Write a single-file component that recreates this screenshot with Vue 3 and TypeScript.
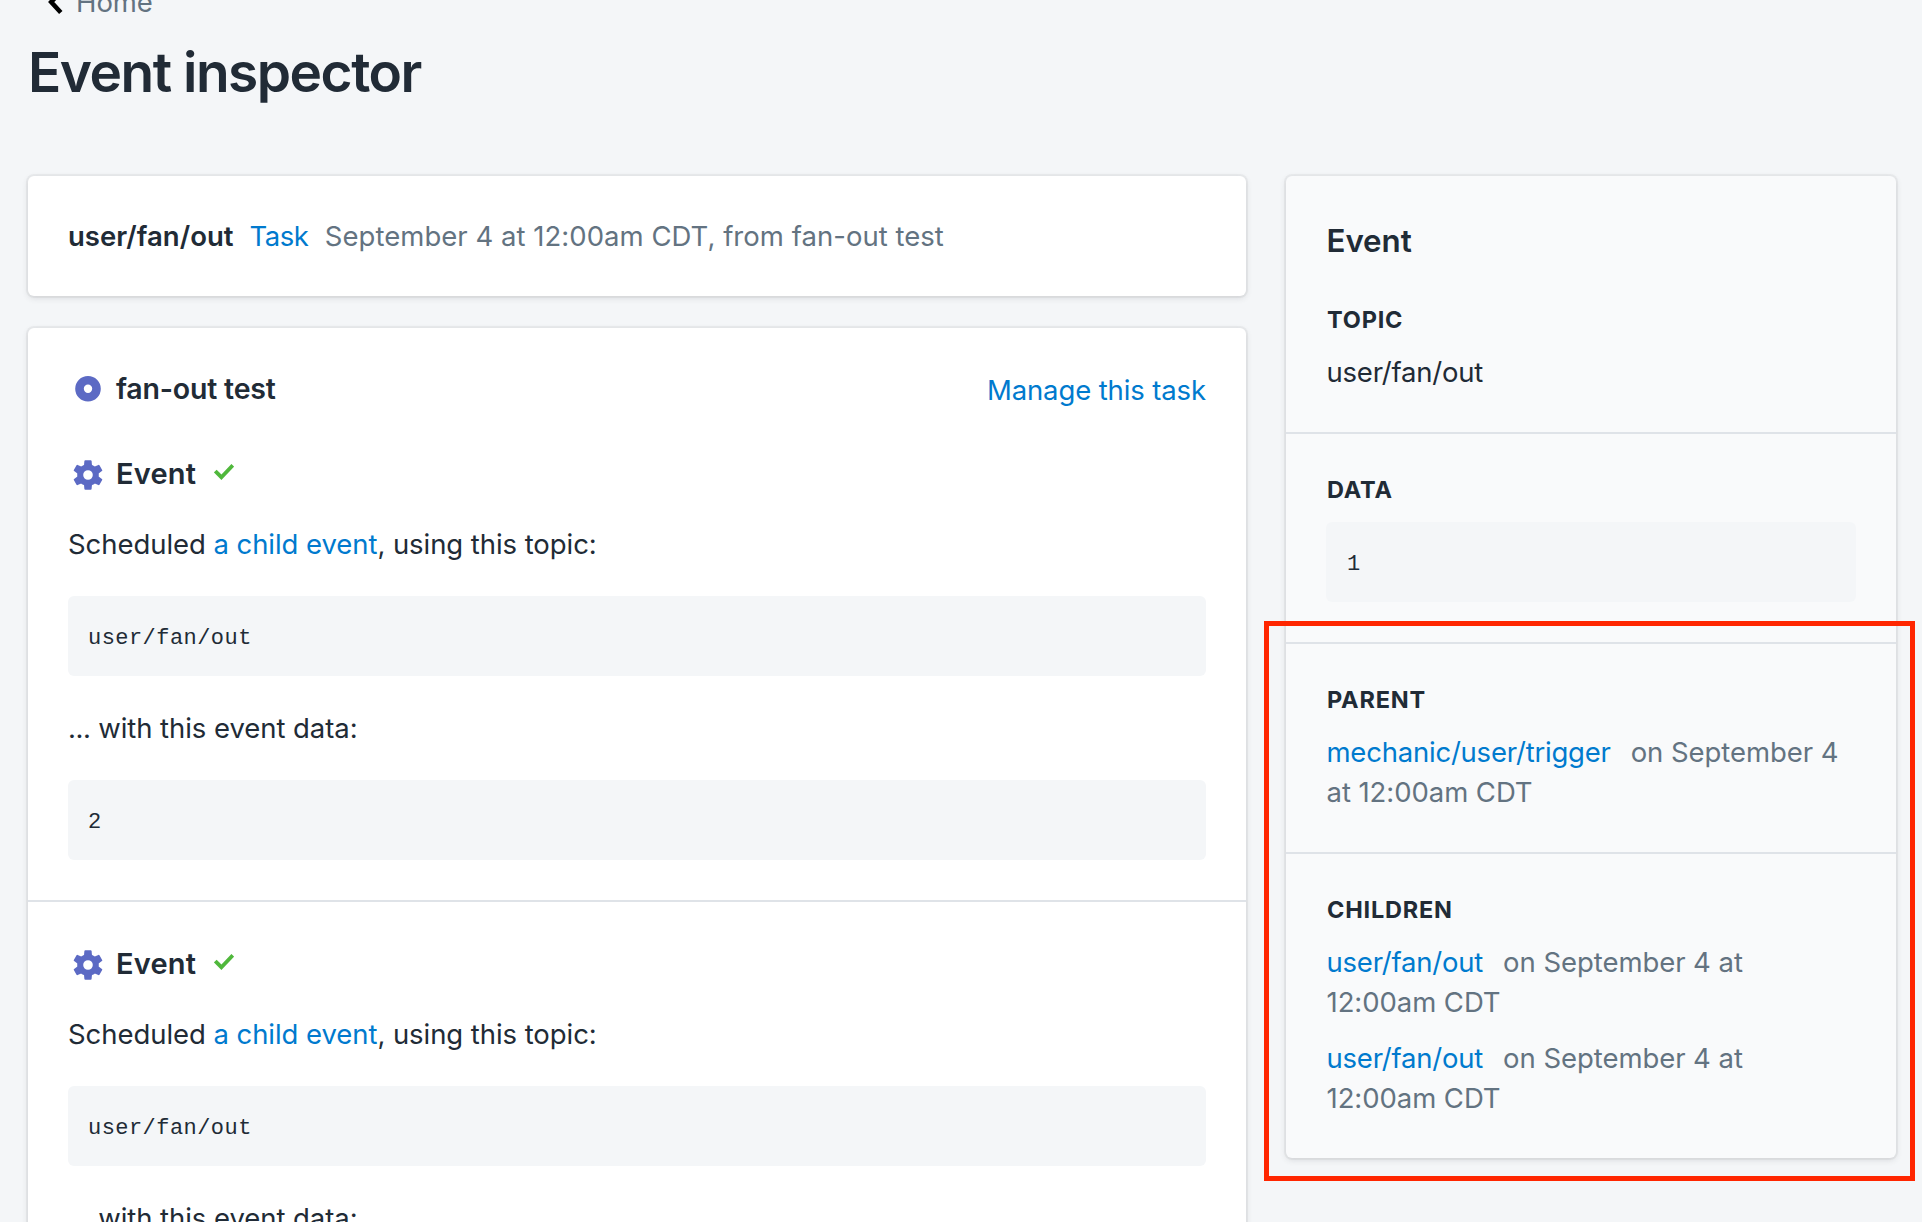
<script setup lang="ts">
interface RelatedEvent {
  id: number
  topic: string
  when: string
}

interface ActionRun {
  id: number
  topic: string
  data: string
}

const runs: ActionRun[] = [
  { id: 1, topic: 'user/fan/out', data: '2' },
  { id: 2, topic: 'user/fan/out', data: '3' },
]

const parents: RelatedEvent[] = [
  { id: 1, topic: 'mechanic/user/trigger', when: 'on September 4 at 12:00am CDT' },
]

const children: RelatedEvent[] = [
  { id: 2, topic: 'user/fan/out', when: 'on September 4 at 12:00am CDT' },
  { id: 3, topic: 'user/fan/out', when: 'on September 4 at 12:00am CDT' },
]

const gearTeeth: number[] = [0, 60, 120, 180, 240, 300]
</script>

<template>
  <div class="page">
    <header class="page-header">
      <a class="breadcrumb">
        <svg class="chevron" width="16" height="26" viewBox="0 0 16 26">
          <path d="M12.8 2.5 3.2 13l9.6 10.5" fill="none" stroke="#000" stroke-width="4.6" />
        </svg>
        <span class="home">Home</span>
      </a>
      <h1 class="title">Event inspector</h1>
    </header>

    <div class="layout">
      <main class="main">
        <section class="card summary">
          <strong class="summary-topic">user/fan/out</strong>
          <a class="link summary-task">Task</a>
          <span class="subdued summary-when">September 4 at 12:00am CDT, from fan-out test</span>
        </section>

        <section class="card">
          <div class="task-head">
            <svg class="icon" width="40" height="40" viewBox="0 0 40 40">
              <path fill="#5c6ac4" fill-rule="evenodd" d="M20 8a12.8 12.8 0 1 0 0 25.6A12.8 12.8 0 0 0 20 8zm0 8.6a4.2 4.2 0 1 1 0 8.4 4.2 4.2 0 0 1 0-8.4z" />
            </svg>
            <h2 class="task-name">fan-out test</h2>
            <a class="link manage">Manage this task</a>
          </div>

          <article v-for="run in runs" :key="run.id" class="run">
            <div class="run-head">
              <svg class="icon" width="40" height="40" viewBox="0 0 40 40">
                <g transform="translate(20 23)" fill="#5c6ac4">
                  <path v-for="a in gearTeeth" :key="a" :transform="`rotate(${a})`" d="M-4-9.5-3.6-14q.1-.8.9-.8h5.4q.8 0 .9.8L4-9.5z" />
                  <path fill-rule="evenodd" d="M0-10.8a10.8 10.8 0 1 0 0 21.6 10.8 10.8 0 0 0 0-21.6zm0 6a4.8 4.8 0 1 1 0 9.6 4.8 4.8 0 0 1 0-9.6z" />
                </g>
              </svg>
              <h3 class="run-name">Event</h3>
              <svg class="check" width="20" height="16" viewBox="0 0 20 16">
                <path d="M1.3 7 7.4 13.2 18.8 1.3" fill="none" stroke="#50b83c" stroke-width="3.8" />
              </svg>
            </div>
            <p class="line scheduled">Scheduled <a class="link">a child event</a>, using this topic:</p>
            <pre class="code">{{ run.topic }}</pre>
            <p class="line"><span class="dots">...</span> with this event data:</p>
            <pre class="code">{{ run.data }}</pre>
          </article>
        </section>
      </main>

      <aside class="card side">
        <section class="side-section">
          <h2 class="side-title">Event</h2>
          <h3 class="sub">Topic</h3>
          <p class="side-text side-topic">user/fan/out</p>
        </section>
        <section class="side-section">
          <h3 class="sub">Data</h3>
          <pre class="code side-code">1</pre>
        </section>
        <section class="side-section">
          <h3 class="sub">Parent</h3>
          <p v-for="e in parents" :key="e.id" class="side-text"><a class="link side-topic">{{ e.topic }}</a><span class="subdued when">{{ e.when }}</span></p>
        </section>
        <section class="side-section">
          <h3 class="sub">Children</h3>
          <p v-for="e in children" :key="e.id" class="side-text"><a class="link side-topic">{{ e.topic }}</a><span class="subdued when">{{ e.when }}</span></p>
        </section>
        <div class="highlight"></div>
      </aside>
    </div>
  </div>
</template>

<style>
body {
  background: #f4f6f8;
  overflow: hidden;
}
</style>

<style scoped>
.page {
  box-sizing: border-box;
  width: 1922px;
  height: 1222px;
  overflow: hidden;
  padding: 0 26px 0 28px;
  background: #f4f6f8;
  color: #212b36;
  font: 400 27.5px/40px Inter, "Liberation Sans", sans-serif;
  letter-spacing: -0.06px;
}
h1, h2, h3, p, pre {
  margin: 0;
}
.page-header {
  display: flow-root;
  height: 176px;
}
.breadcrumb {
  display: flex;
  align-items: flex-start;
  color: #637381;
  height: 40px;
  margin-top: -18px;
  padding-left: 20px;
}
.chevron {
  margin-top: 7px;
}
.home {
  margin-left: 12px;
}
.title {
  margin-top: 18px;
  font-size: 55px;
  line-height: 64px;
  font-weight: 600;
  letter-spacing: -1.5px;
}
.layout {
  display: flex;
  align-items: flex-start;
  gap: 40px;
}
.main {
  width: 1218px;
  display: flex;
  flex-direction: column;
  gap: 32px;
}
.card {
  background: #fff;
  border-radius: 6px;
  box-shadow: 0 0 0 2px rgba(63, 63, 68, 0.05), 0 2px 6px rgba(63, 63, 68, 0.15);
}
.summary {
  display: flex;
  padding: 40px;
  letter-spacing: 0.03px;
}
.summary-topic {
  font-weight: 600;
}
.summary-task {
  margin-left: 16px;
  letter-spacing: -0.5px;
}
.summary-when {
  margin-left: 16.5px;
}
.link {
  color: #007ace;
}
.subdued {
  color: #637381;
}
.task-head {
  display: flex;
  height: 44px;
  padding: 40px 40px 0;
}
.icon {
  flex: none;
}
.task-name, .run-name {
  margin-left: 8px;
  padding-top: 1px;
  font-size: 28.5px;
  font-weight: 600;
  letter-spacing: -0.2px;
}
.manage {
  margin-left: auto;
  padding-top: 2px;
  letter-spacing: -0.12px;
}
.run {
  padding: 40px;
}
.run + .run {
  border-top: 2px solid #dfe3e8;
}
.run-head {
  display: flex;
  height: 40px;
}
.run-name {
  padding-top: 2px;
  font-size: 29px;
  line-height: 39px;
  letter-spacing: 0.2px;
}
.check {
  margin: 12px 0 0 18px;
}
.line {
  margin: 32px 0;
}
.dots {
  letter-spacing: -0.4px;
}
.code {
  box-sizing: border-box;
  height: 80px;
  padding: 23px 20px 17px;
  border-radius: 6px;
  background: #f4f6f8;
  font: 22px/40px "Courier New", "Liberation Mono", monospace;
  letter-spacing: 0.45px;
}
.side {
  position: relative;
  width: 610px;
  background: #f9fafb;
}
.side-code {
  padding-left: 21px;
}
.side-section {
  padding: 40px;
}
.side-section + .side-section {
  border-top: 2px solid #dfe3e8;
}
.side-title {
  margin-bottom: 39px;
  padding-top: 1px;
  padding-left: 0.5px;
  font-size: 31.3px;
  line-height: 48px;
  font-weight: 600;
}
.sub {
  margin-bottom: 16px;
  padding-left: 1px;
  font-size: 23.5px;
  line-height: 32px;
  font-weight: 700;
  letter-spacing: 0.8px;
  text-transform: uppercase;
}
.side-text {
  padding-left: 0.5px;
}
.side-text + .side-text {
  margin-top: 16px;
}
.side-topic {
  letter-spacing: -0.22px;
}
.when {
  margin-left: 20px;
}
.highlight {
  position: absolute;
  box-sizing: border-box;
  left: -22px;
  top: 445px;
  width: 651px;
  height: 560px;
  border: 5px solid #ff2600;
}
</style>
